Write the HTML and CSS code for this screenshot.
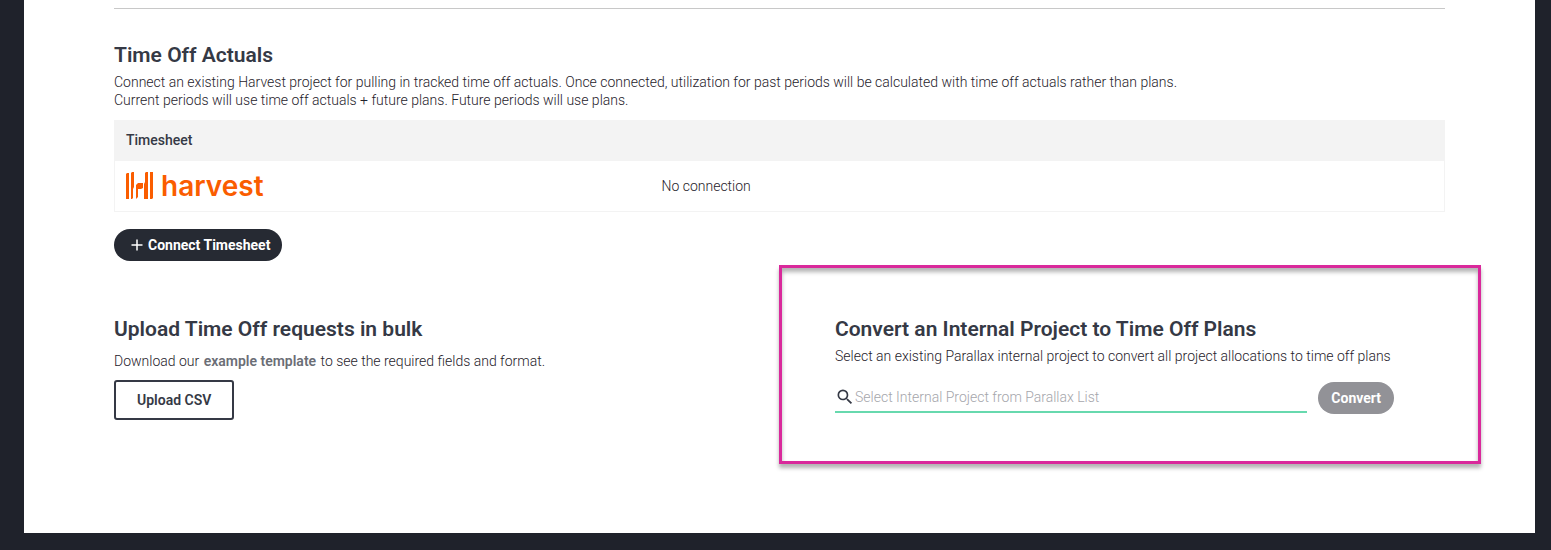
FILE: index.html
```html
<!DOCTYPE html>
<html lang="en">
  <head>
    <meta charset="UTF-8" />
    <meta name="viewport" content="width=device-width, initial-scale=1.0" />
    <title>Time Off Settings</title>
    <link rel="stylesheet" href="styles.css">
  </head>
  <body>
    <main class="panel">
      <section class="actuals">
        <h2>Time Off Actuals</h2>
        <p>
          Connect an existing Harvest project for pulling in tracked time off actuals. Once connected, utilization for past periods will be calculated with time off actuals rather than plans.<br />
          Current periods will use time off actuals + future plans. Future periods will use plans.
        </p>
        <table>
          <thead>
            <tr>
              <th class="service">Timesheet</th>
              <th></th>
            </tr>
          </thead>
          <tbody>
            <tr>
              <td>
                <div class="harvest-logo">
                  <svg width="28" height="28" viewBox="0 0 28 28" fill="#fa5d00" aria-hidden="true">
                    <path d="M0 2L1 1H3V27H0z" />
                    <path d="M5 1L6 0H8V15L7 17V26L6 27H5z" />
                    <path d="M10 13L12 11H17V16L15 17H12V25L10 27z" />
                    <path d="M19 1L20 0H22V27H18V12L19 10z" />
                    <path d="M24 0H27V26L26 27H24z" />
                  </svg>
                  <span>harvest</span>
                </div>
              </td>
              <td>No connection</td>
            </tr>
          </tbody>
        </table>
        <button type="button" class="pill">
          <svg width="12" height="12" viewBox="0 0 12 12" fill="none" stroke="#fff" stroke-width="1.5" aria-hidden="true">
            <path d="M6 0.5V11.5M0.5 6H11.5" />
          </svg>
          Connect Timesheet
        </button>
      </section>

      <div class="columns">
        <section class="upload">
          <h2>Upload Time Off requests in bulk</h2>
          <p>Download our <a href="#">example template</a> to see the required fields and format.</p>
          <button type="button" class="outline">Upload CSV</button>
        </section>

        <section class="convert">
          <div class="highlight"></div>
          <h2>Convert an Internal Project to Time Off Plans</h2>
          <p>Select an existing Parallax internal project to convert all project allocations to time off plans</p>
          <form class="convert-form">
            <label class="search" for="project">
              <svg width="20" height="20" viewBox="0 0 24 24" fill="#353945" aria-hidden="true">
                <path d="M15.5 14h-.79l-.28-.27A6.471 6.471 0 0 0 16 9.5 6.5 6.5 0 1 0 9.5 16c1.61 0 3.09-.59 4.23-1.57l.27.28v.79l5 4.99L20.49 19l-4.99-5zm-6 0C7.01 14 5 11.99 5 9.5S7.01 5 9.5 5 14 7.01 14 9.5 11.99 14 9.5 14z" />
              </svg>
              <input type="text" id="project" name="project" aria-label="Internal project" placeholder="Select Internal Project from Parallax List" autocomplete="off" />
            </label>
            <button type="submit" class="pill" disabled>Convert</button>
          </form>
        </section>
      </div>
    </main>
  </body>
</html>
```

FILE: styles.css
```css
* {
  box-sizing: border-box;
}
body {
  margin: 0;
  background-color: #1f222b;
  color: #353945;
  font-family: Roboto, sans-serif;
  font-size: 14px;
  font-weight: 300;
  line-height: 18px;
}
.panel {
  margin: 0 16px 17px 24px;
  padding: 8px 90px 113px;
  background-color: white;
}
h2 {
  margin: 0;
  font-size: 21px;
  font-weight: 600;
  line-height: 24px;
}
p,
td {
  color: #1f222b;
}
p {
  margin: 0;
}
.actuals {
  padding-top: 34px;
  border-top: 1px solid #c8c8c8;
}
.actuals p {
  margin: 6px 0 11px;
}
table {
  width: 100%;
  table-layout: fixed;
  border: 1px solid #f3f3f3;
  border-collapse: collapse;
}
th,
td {
  padding: 0 11px;
  text-align: left;
}
th {
  height: 40px;
  padding-bottom: 2px;
  background-color: #f3f3f3;
  font-weight: 500;
}
td {
  height: 51px;
}
.service {
  width: 40.3%;
}
.harvest-logo {
  display: flex;
  align-items: center;
  gap: 7px;
  color: #fa5d00;
  font-family: Inter, sans-serif;
  font-size: 28px;
  font-weight: 600;
  line-height: 28px;
}
button {
  font-family: inherit;
  font-size: 14px;
  font-weight: 600;
}
.pill {
  display: flex;
  align-items: center;
  gap: 5px;
  height: 32px;
  padding: 0 13px;
  border: none;
  border-radius: 16px;
  background-color: #262a33;
  color: white;
  font-weight: 700;
}
.pill:disabled {
  background-color: #929297;
}
.actuals .pill {
  margin-top: 17px;
  padding: 0 12px 0 17px;
}
.columns {
  display: flex;
  align-items: flex-start;
  justify-content: space-between;
  margin-top: 56px;
}
.upload p {
  margin: 11px 0 10px;
}
.upload a {
  margin: 0 1px;
  color: #6b6e76;
  font-weight: 600;
  text-decoration: none;
}
.outline {
  height: 40px;
  padding: 0 21px;
  border: 2px solid #353945;
  border-radius: 3px;
  background-color: white;
  color: #353945;
}
.convert {
  position: relative;
  width: 42%;
  margin-right: 51px;
}
.convert p {
  margin-top: 6px;
}
.convert-form {
  display: flex;
  gap: 11px;
  margin-top: 17px;
}
.search {
  display: flex;
  flex: 1;
  align-items: center;
  height: 31px;
  border-bottom: 2px solid #67d9ae;
}
.search input {
  flex: 1;
  padding: 0;
  border: none;
  outline: none;
  font: inherit;
}
.search input::placeholder {
  color: #a5a6ab;
}
/* callout frame drawn around the convert section */
.highlight {
  position: absolute;
  inset: -52px -87px -50px -56px;
  border: 3px solid #d9299b;
  box-shadow: 0 4px 4px rgba(0, 0, 0, 0.3), inset 0 4px 4px rgba(0, 0, 0, 0.3);
  pointer-events: none;
}
```
